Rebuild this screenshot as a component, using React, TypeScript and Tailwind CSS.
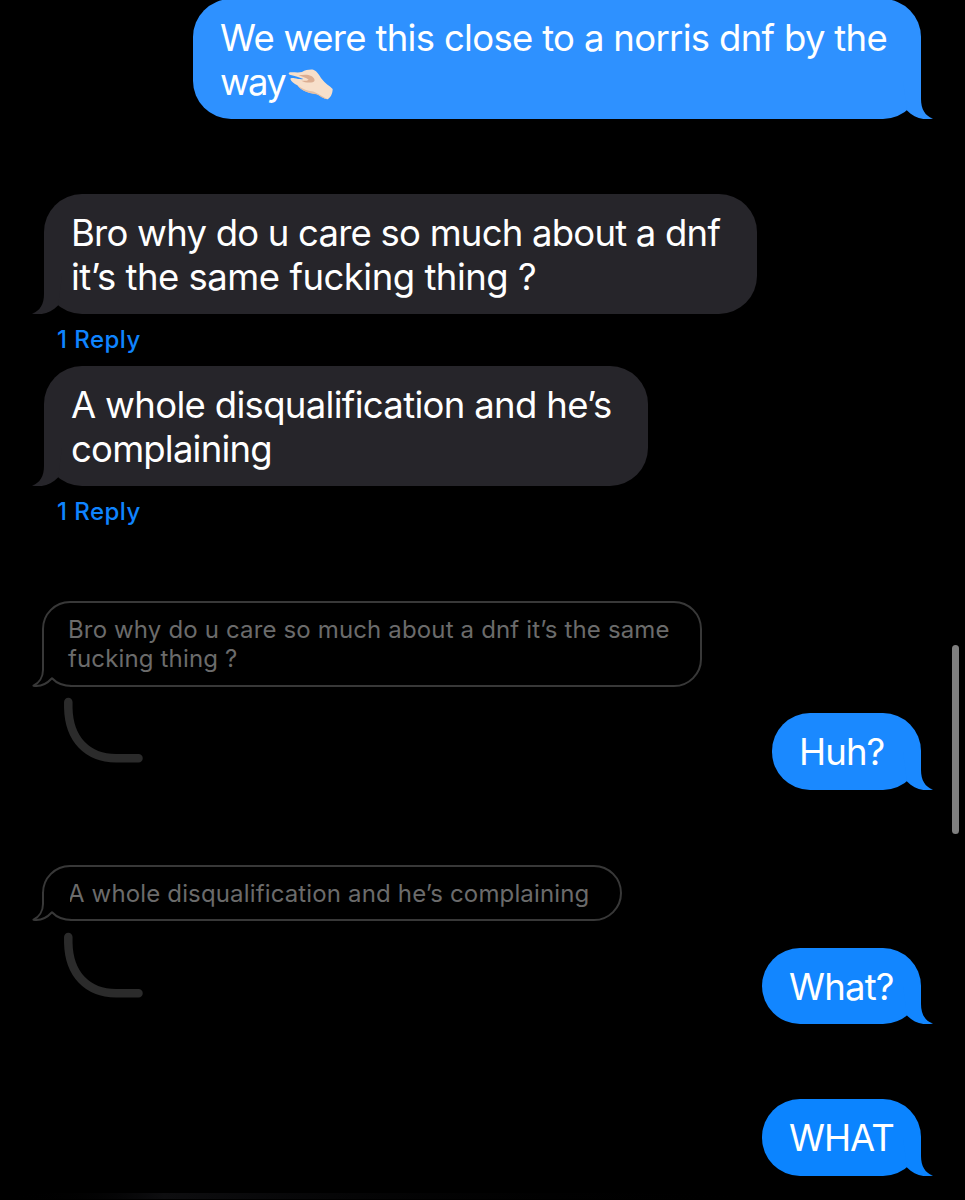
import type { ReactNode } from "react";
import clsx from "clsx";

interface BubbleProps {
  children: ReactNode;
  className?: string;
}

const SentBubble = ({ children, className }: BubbleProps) => (
  <div
    className={clsx(
      "relative self-end rounded-[38px] bg-current pl-[27px] pt-[17px] text-[36.5px] leading-[44px] whitespace-nowrap",
      className
    )}
  >
    <div className="text-white">{children}</div>
    <svg
      className="absolute -right-3 bottom-0"
      width="30"
      height="38"
      viewBox="0 0 30 38"
      fill="currentColor"
    >
      <path d="M0 0H18V18C18 28 22 35 30 37.6C20 39.5 11 37 4 29.5Z" />
    </svg>
  </div>
);

const ReceivedBubble = ({ children, className }: BubbleProps) => (
  <div
    className={clsx(
      "relative h-[120px] rounded-[38px] bg-[#26252a] pl-[27px] pt-[17px] text-[36.5px] leading-[44px] whitespace-nowrap text-white",
      className
    )}
  >
    {children}
    <svg
      className="absolute -left-3 bottom-0 text-[#26252a]"
      width="30"
      height="38"
      viewBox="0 0 30 38"
      fill="currentColor"
    >
      <path d="M30 0H12V18C12 28 8 35 0 37.6C10 39.5 19 37 26 29.5Z" />
    </svg>
  </div>
);

// Outlined preview of the message being replied to, with the thread line below it
const QuotedBubble = ({ children, className }: BubbleProps) => (
  <div
    className={clsx(
      "relative rounded-[28px] border-2 border-[#383838] pt-[13px] pl-[24px] text-[24px] leading-[28.5px] tracking-[0.15px] whitespace-nowrap text-[#6b6b6b]",
      className
    )}
  >
    {children}
    <svg
      className="absolute -bottom-[2px] -left-[12px]"
      width="40"
      height="29"
      viewBox="0 0 40 29"
      fill="none"
    >
      <path d="M10 0H38V29H10Z" fill="#000" />
      <path
        d="M11 0V12C11 19 7 25 1.5 27.7C9 29 15 25.5 20 20.2C25 25.5 32 28 40 28"
        stroke="#383838"
        strokeWidth="2"
        strokeLinejoin="round"
      />
    </svg>
  </div>
);

const ThreadLine = () => (
  <svg width="80" height="66" viewBox="0 0 80 66" fill="none">
    <path
      d="M4.3 5V11C5 42 23 61 52 61.3H74.5"
      stroke="#2b2b2b"
      strokeWidth="8.5"
      strokeLinecap="round"
    />
  </svg>
);

const PinchEmoji = () => (
  <svg className="mt-[9px] ml-[3px]" width="46" height="32" viewBox="0 0 138 96">
    <path
      d="M6 10C18 9 30 12 42 9C52 3 64 1 76 2C88 6 94 20 102 31C111 44 124 50 134 60C134 73 128 86 119 91C109 89 100 83 90 77C80 71 68 73 55 68C42 64 34 56 28 49C18 44 10 38 7 30C8 26 14 26 20 28C30 30 40 32 46 30C34 25 16 19 5 17C1 15 1 11 6 10Z"
      fill="#f7dfca"
    />
    <path
      d="M32 18C46 18 58 15 70 21C80 27 84 37 74 40C62 42 48 40 40 35C46 36 58 36 62 32C54 26 42 24 32 18Z"
      fill="#dcae92"
    />
    <path d="M28 49C38 55 48 64 66 66C82 67 96 78 119 91C104 90 96 80 86 76C66 74 42 68 28 49Z" fill="#e3bfa5" />
  </svg>
);

const ReplyCount = () => (
  <button className="ml-[57px] h-[52px] self-start text-[24px] leading-[52px] font-medium tracking-[0.45px] text-[#0f84ff]">
    1 Reply
  </button>
);

export default function App() {
  return (
    <main className="relative flex h-[1200px] w-[965px] flex-col overflow-hidden bg-black font-['Inter',sans-serif]">
      <SentBubble className="-mt-px mr-11 h-[120px] w-[728px] text-[#2e91ff]">
        <p className="tracking-[-0.68px]">We were this close to a norris dnf by the</p>
        <div className="flex">
          <p className="tracking-[-1.8px]">way</p>
          <PinchEmoji />
        </div>
      </SentBubble>

      <ReceivedBubble className="mt-[75px] ml-11 w-[713px]">
        <p className="tracking-[-0.78px]">Bro why do u care so much about a dnf</p>
        <p className="tracking-[-0.5px]">it’s the same fucking thing ?</p>
      </ReceivedBubble>
      <ReplyCount />
      <ReceivedBubble className="ml-11 w-[604px]">
        <p className="tracking-[-0.68px]">A whole disqualification and he’s</p>
        <p className="tracking-[-0.8px]">complaining</p>
      </ReceivedBubble>
      <ReplyCount />

      <QuotedBubble className="mt-[63px] ml-[42px] h-[86px] w-[660px]">
        <p>Bro why do u care so much about a dnf it’s the same</p>
        <p>fucking thing ?</p>
      </QuotedBubble>
      <div className="mt-[10px] flex h-[93px] items-start justify-between pr-11 pl-[63.5px]">
        <ThreadLine />
        <SentBubble className="mt-[16px] h-[77px] w-[149px] tracking-[-0.9px] text-[#1a89ff]">
          Huh?
        </SentBubble>
      </div>

      <QuotedBubble className="mt-[75px] ml-[42px] h-[56px] w-[580px]">
        <p>A whole disqualification and he’s complaining</p>
      </QuotedBubble>
      <div className="mt-[11px] flex h-[92px] items-start justify-between pr-11 pl-[63.5px]">
        <ThreadLine />
        <SentBubble className="mt-[16px] h-[76px] w-[159px] tracking-[-0.8px] text-[#1286ff]">
          What?
        </SentBubble>
      </div>

      <SentBubble className="mt-[75px] mr-11 h-[77px] w-[159px] tracking-[-1px] text-[#0b84ff]">
        WHAT
      </SentBubble>

      {/* Top edge of the input bar */}
      <div className="mt-[17px] h-[6px] w-[820px] shrink-0 bg-linear-to-r from-black via-[#0e0e10] via-20% to-black" />

      <div className="absolute top-[645px] left-[952px] h-[189px] w-[6.5px] rounded-full bg-[#7f7f7f]" />
    </main>
  );
}
